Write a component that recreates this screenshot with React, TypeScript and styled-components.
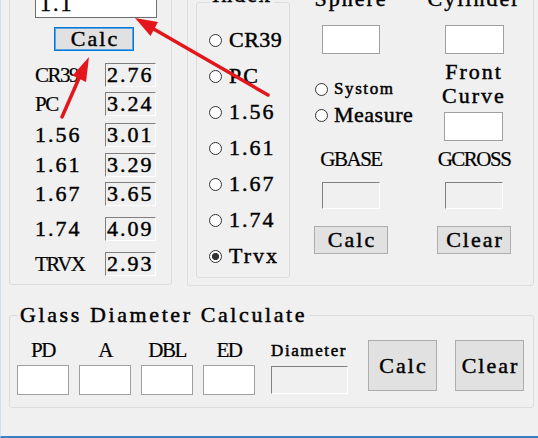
import styled, { createGlobalStyle, css } from "styled-components";

const GlobalStyle = createGlobalStyle`
  html, body { margin: 0; padding: 0; background: #f0f0f0; }
`;

const mono = css`
  font-family: "Liberation Serif", "Times New Roman", serif;
  font-size: 22px;
  font-weight: 400;
  letter-spacing: 2px;
  -webkit-text-stroke: 0.45px #000;
`;

const smallMono = css`
  font-size: 17px;
  letter-spacing: 1.6px;
  -webkit-text-stroke: 0.5px #000;
`;

const serif = css`
  font-family: "Liberation Serif", "Times New Roman", serif;
  font-size: 21px;
  letter-spacing: -1.5px;
  line-height: 22px;
  -webkit-text-stroke: 0.2px #000;
`;

const Window = styled.div`
  position: relative;
  display: flex;
  flex-direction: column;
  width: 538px;
  height: 438px;
  box-sizing: border-box;
  overflow: hidden;
  background: #f0f0f0;
  border-left: 1px solid #cddff1;
  border-bottom: 2px solid #3b7fc4;
  color: #000;
`;

const TopRow = styled.div`
  display: flex;
  align-items: flex-start;
  gap: 15px;
  margin-top: -30px;
  padding-left: 8px;
`;

const Group = styled.div<{ $w: number; $h: number }>`
  box-sizing: border-box;
  flex-shrink: 0;
  width: ${(p) => p.$w}px;
  height: ${(p) => p.$h}px;
  border: 1px solid #dcdcdc;
  border-radius: 3px;
`;

const LeftGroup = styled(Group)`
  display: flex;
  flex-direction: column;
  align-items: flex-start;
  padding: 19px 0 0 25px;
`;

const MiddleGroup = styled(Group)`
  display: flex;
  align-items: flex-start;
  padding: 18px 0 0 8px;
`;

const EditBox = styled.div<{ $w: number; $h: number; $dark?: boolean }>`
  box-sizing: border-box;
  width: ${(p) => p.$w}px;
  height: ${(p) => p.$h}px;
  display: flex;
  align-items: center;
  padding: 0 4px;
  background: #fff;
  border: 1px solid ${(p) => (p.$dark ? "#6e6e6e" : "#a0a0a0")};
  ${mono}
  line-height: 20px;
`;

const SunkenBox = styled.div<{ $w: number; $h: number }>`
  box-sizing: border-box;
  width: ${(p) => p.$w}px;
  height: ${(p) => p.$h}px;
  display: flex;
  align-items: center;
  padding-left: 1px;
  overflow: hidden;
  background: #f0f0f0;
  border: 1px solid;
  border-color: #7f7f7f #ffffff #ffffff #7f7f7f;
  ${mono}
  line-height: 20px;
  white-space: nowrap;
`;

const PushButton = styled.button<{ $w: number; $h: number; $focused?: boolean; $ml?: number; $mt?: number }>`
  box-sizing: border-box;
  flex-shrink: 0;
  width: ${(p) => p.$w}px;
  height: ${(p) => p.$h}px;
  margin: ${(p) => p.$mt ?? 0}px 0 0 ${(p) => p.$ml ?? 0}px;
  padding: 0 0 0 2px;
  background: #e1e1e1;
  border: 1px solid ${(p) => (p.$focused ? "#0078d7" : "#adadad")};
  box-shadow: ${(p) => (p.$focused ? "inset 0 0 0 1px #5aa4e6" : "none")};
  color: #000;
  ${mono}
  line-height: 20px;
`;

const ValueRow = styled.div<{ $mt: number }>`
  display: grid;
  grid-template-columns: 70px 51px;
  align-items: center;
  margin-top: ${(p) => p.$mt}px;
`;

const SerifLabel = styled.span`
  ${serif}
  white-space: nowrap;
`;

const MonoLabel = styled.span<{ $small?: boolean }>`
  ${mono}
  line-height: 20px;
  white-space: nowrap;
  ${(p) => p.$small && smallMono}
`;

const IndexGroup = styled.fieldset`
  box-sizing: border-box;
  flex-shrink: 0;
  width: 94px;
  height: 293px;
  min-width: 0;
  margin: -4px 0 0;
  padding: 3px 0 0 12px;
  border: 1px solid #dcdcdc;
  border-radius: 3px;
`;

const Legend = styled.legend<{ $pt?: number; $pb?: number; $wide?: boolean }>`
  ${mono}
  line-height: 20px;
  margin-left: 1px;
  padding: ${(p) => p.$pt ?? 0}px 2px ${(p) => p.$pb ?? 0}px;
  ${(p) => p.$wide && "letter-spacing: 2.6px;"}
`;

const RadioList = styled.div`
  display: flex;
  flex-direction: column;
`;

const RadioRow = styled.label<{ $h: number; $gap: number; $small?: boolean; $tight?: boolean }>`
  display: flex;
  align-items: center;
  gap: ${(p) => p.$gap}px;
  height: ${(p) => p.$h}px;
  ${mono}
  line-height: 20px;
  white-space: nowrap;
  ${(p) => p.$tight && "letter-spacing: 0.5px;"}
  ${(p) => p.$small && smallMono}
`;

const RadioDot = styled.span<{ $checked?: boolean }>`
  box-sizing: border-box;
  flex-shrink: 0;
  width: 13px;
  height: 13px;
  border-radius: 50%;
  border: 1px solid #333;
  -webkit-text-stroke: 0;
  background: ${(p) =>
    p.$checked ? "radial-gradient(circle, #333 0 3.3px, #fff 3.9px)" : "#fff"};
`;

const RightArea = styled.div`
  display: flex;
  flex-direction: column;
  width: 233px;
  margin-left: 6px;
`;

const PairRow = styled.div<{ $mt?: number }>`
  display: grid;
  grid-template-columns: 110px 110px;
  column-gap: 13px;
  justify-items: center;
  align-items: start;
  margin-top: ${(p) => p.$mt ?? 0}px;
`;

const HeadLabel = styled.span`
  ${mono}
  line-height: 20px;
  white-space: nowrap;
`;

const RadioCell = styled.div`
  justify-self: stretch;
  display: flex;
  flex-direction: column;
  gap: 6px;
  padding: 25px 0 0 19px;
`;

const CurveCell = styled.div`
  display: flex;
  flex-direction: column;
  align-items: center;
  padding-top: 6px;
`;

const TwoLine = styled.div`
  ${mono}
  line-height: 24px;
  text-align: center;
  margin-bottom: 4px;
`;

const BottomGroup = styled.fieldset`
  box-sizing: border-box;
  width: 525px;
  height: 103px;
  min-width: 0;
  margin: 19px 0 0 8px;
  padding: 14px 0 0 7px;
  border: 1px solid #dcdcdc;
  border-radius: 3px;
`;

const FieldRow = styled.div`
  display: flex;
  align-items: flex-start;
`;

const InputFields = styled.div`
  display: flex;
  gap: 10px;
`;

const Field = styled.div`
  display: flex;
  flex-direction: column;
  align-items: center;
  gap: 4px;
`;

const DiameterField = styled.div`
  display: flex;
  flex-direction: column;
  gap: 5px;
  margin: 2px 0 0 16px;
`;

const SmallHead = styled.span`
  ${mono}
  ${smallMono}
  line-height: 20px;
  white-space: nowrap;
`;

const Annotations = styled.svg`
  position: absolute;
  left: -1px;
  top: 0;
  pointer-events: none;
`;

const densities = [
  { label: "CR39", serif: true, value: "2.76", mt: 12 },
  { label: "PC", serif: true, value: "3.24", mt: 5 },
  { label: "1.56", serif: false, value: "3.01", mt: 7 },
  { label: "1.61", serif: false, value: "3.29", mt: 6 },
  { label: "1.67", serif: false, value: "3.65", mt: 5 },
  { label: "1.74", serif: false, value: "4.09", mt: 11 },
  { label: "TRVX", serif: true, value: "2.93", mt: 11 },
];

const indexes = ["CR39", "PC", "1.56", "1.61", "1.67", "1.74", "Trvx"];

const fields = ["PD", "A", "DBL", "ED"];

const RED = "#e3161b";

export default function App() {
  return (
    <Window>
      <GlobalStyle />
      <TopRow>
        <LeftGroup $w={163} $h={315}>
          <EditBox $w={122} $h={28} $dark>
            1.1
          </EditBox>
          <PushButton $w={80} $h={24} $focused $ml={19} $mt={9}>
            Calc
          </PushButton>
          {densities.map((d) => (
            <ValueRow key={d.label} $mt={d.mt}>
              {d.serif ? <SerifLabel>{d.label}</SerifLabel> : <MonoLabel>{d.label}</MonoLabel>}
              <SunkenBox $w={51} $h={24}>
                {d.value}
              </SunkenBox>
            </ValueRow>
          ))}
        </LeftGroup>

        <MiddleGroup $w={347} $h={316}>
          <IndexGroup>
            <Legend $pb={14}>Index</Legend>
            <RadioList>
              {indexes.map((name) => (
                <RadioRow key={name} $h={36} $gap={7} $tight={name === "CR39"}>
                  <RadioDot $checked={name === "Trvx"} />
                  {name}
                </RadioRow>
              ))}
            </RadioList>
          </IndexGroup>

          <RightArea>
            <PairRow>
              <HeadLabel>Sphere</HeadLabel>
              <HeadLabel>Cylinder</HeadLabel>
            </PairRow>
            <PairRow $mt={16}>
              <EditBox $w={58} $h={29} />
              <EditBox $w={59} $h={29} />
            </PairRow>
            <PairRow>
              <RadioCell>
                <RadioRow $h={20} $gap={6} $small>
                  <RadioDot />
                  Systom
                </RadioRow>
                <RadioRow $h={20} $gap={6} $tight>
                  <RadioDot />
                  Measure
                </RadioRow>
              </RadioCell>
              <CurveCell>
                <TwoLine>
                  Front
                  <br />
                  Curve
                </TwoLine>
                <EditBox $w={59} $h={29} />
              </CurveCell>
            </PairRow>
            <PairRow $mt={7}>
              <SerifLabel>GBASE</SerifLabel>
              <SerifLabel>GCROSS</SerifLabel>
            </PairRow>
            <PairRow $mt={12}>
              <SunkenBox $w={58} $h={27} />
              <SunkenBox $w={58} $h={27} />
            </PairRow>
            <PairRow $mt={17}>
              <PushButton $w={74} $h={28}>
                Calc
              </PushButton>
              <PushButton $w={74} $h={28}>
                Clear
              </PushButton>
            </PairRow>
          </RightArea>
        </MiddleGroup>
      </TopRow>

      <BottomGroup>
        <Legend $wide>Glass Diameter Calculate</Legend>
        <FieldRow>
          <InputFields>
            {fields.map((f) => (
              <Field key={f}>
                <SerifLabel>{f}</SerifLabel>
                <EditBox $w={52} $h={30} />
              </Field>
            ))}
          </InputFields>
          <DiameterField>
            <SmallHead>Diameter</SmallHead>
            <SunkenBox $w={77} $h={28} />
          </DiameterField>
          <PushButton $w={69} $h={51} $ml={20} $mt={1}>
            Calc
          </PushButton>
          <PushButton $w={69} $h={51} $ml={18} $mt={1}>
            Clear
          </PushButton>
        </FieldRow>
      </BottomGroup>

      <Annotations width={538} height={438} viewBox="0 0 538 438">
        <line x1={268} y1={95} x2={152} y2={28} stroke={RED} strokeWidth={3.5} strokeLinecap="round" />
        <polygon points="135,18 158,22 150.5,36" fill={RED} />
        <line x1={62} y1={117} x2={80} y2={76} stroke={RED} strokeWidth={3.5} strokeLinecap="round" />
        <polygon points="89,57 86,82 72.5,75.5" fill={RED} />
      </Annotations>
    </Window>
  );
}
